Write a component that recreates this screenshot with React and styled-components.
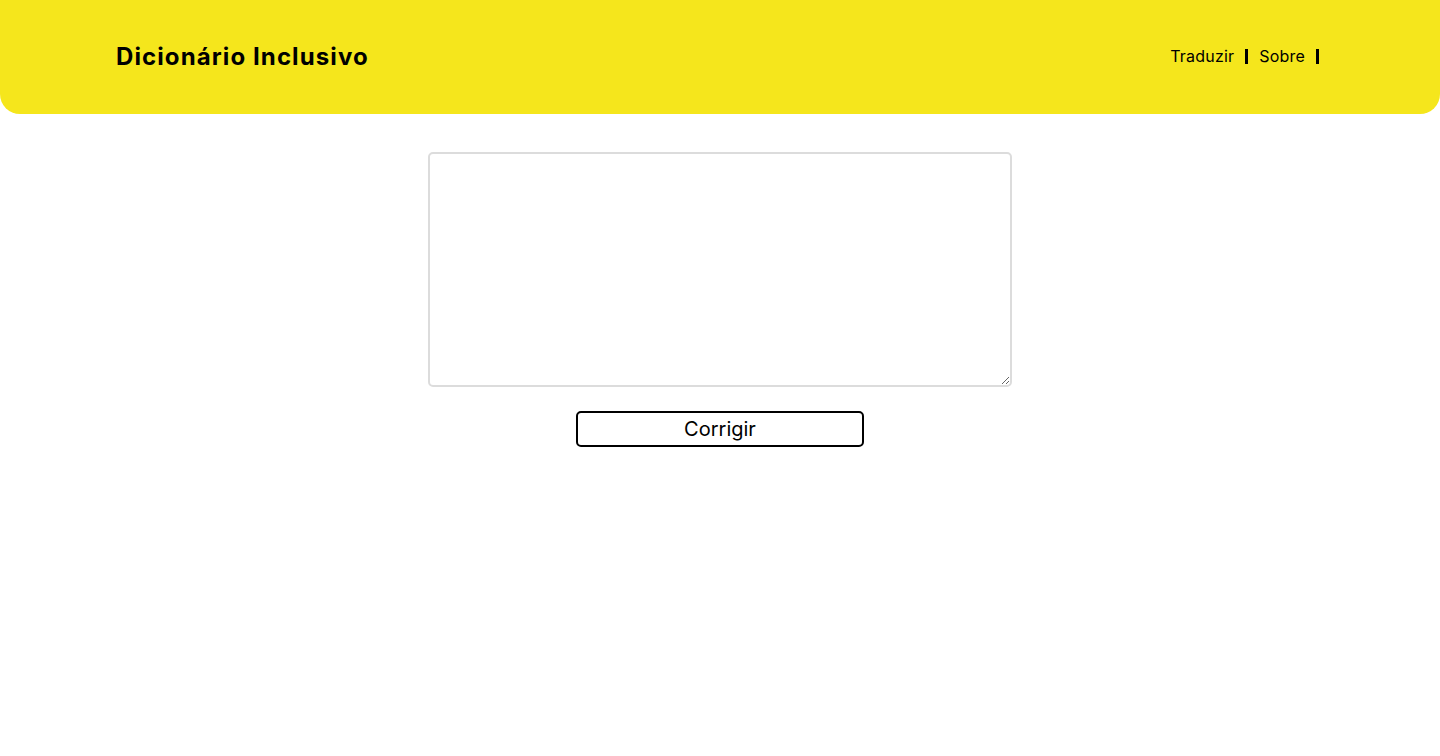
import React from "react";
import styled, { createGlobalStyle } from "styled-components";

const GlobalStyle = createGlobalStyle`
  * { box-sizing: border-box; }
  body {
    margin: 0;
    background: #ffffff;
    font-family: Inter, "Noto Sans", sans-serif;
    color: #000;
  }
`;

const Header = styled.header`
  height: 114px;
  background: #f5e61c;
  border-radius: 0 0 20px 20px;
  display: flex;
  align-items: center;
  justify-content: space-between;
  padding: 0 121px 2px 116px;
`;

const Title = styled.h1`
  margin: 0;
  font-size: 24px;
  font-weight: 700;
  letter-spacing: 1.1px;
`;

const Nav = styled.nav`
  display: flex;
  align-items: center;
`;

const NavLink = styled.a`
  font-size: 16px;
  color: #000;
  text-decoration: none;
  letter-spacing: 0.2px;
  padding-right: 11px;
  margin-left: ${(p) => (p.$first ? "0" : "11px")};
  border-right: 3px solid #000;
  line-height: 15px;
  cursor: pointer;
`;

const Main = styled.main`
  display: flex;
  flex-direction: column;
  align-items: center;
  padding-top: 38px;
  gap: 24px;
`;

const TextArea = styled.textarea`
  width: 584px;
  height: 235px;
  border: 2px solid #dcdcdc;
  border-radius: 5px;
  outline: none;
  font-family: inherit;
  font-size: 16px;
  padding: 8px;
`;

const Button = styled.button`
  width: 288px;
  height: 36px;
  border: 2px solid #000;
  border-radius: 5px;
  background: #fff;
  font-family: inherit;
  font-size: 20px;
  color: #000;
  cursor: pointer;
`;

export default function App() {
  return (
    <>
      <GlobalStyle />
      <Header>
        <Title>Dicionário Inclusivo</Title>
        <Nav>
          <NavLink $first>Traduzir</NavLink>
          <NavLink>Sobre</NavLink>
        </Nav>
      </Header>
      <Main>
        <TextArea />
        <Button>Corrigir</Button>
      </Main>
    </>
  );
}
